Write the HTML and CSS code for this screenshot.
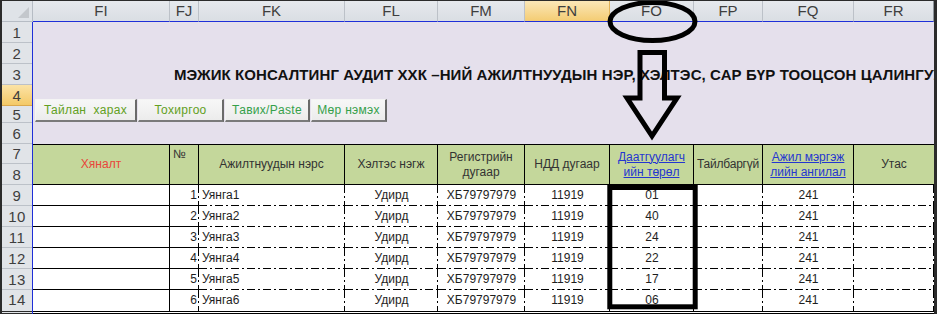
FILE: index.html
```html
<!DOCTYPE html>
<html lang="mn">
<head>
<meta charset="utf-8">
<title>Sheet</title>
<link rel="stylesheet" href="styles.css">
</head>
<body>
<div class="sheet">
  <div class="colbar">
    <div class="corner"><svg class="tri" width="11" height="11" viewBox="0 0 11 11"><polygon points="11,0 11,11 0,11" fill="#c3c7cc"/></svg></div>
    <div class="ch w-fi">FI</div>
    <div class="ch w-fj">FJ</div>
    <div class="ch w-fk">FK</div>
    <div class="ch w-fl">FL</div>
    <div class="ch w-fm">FM</div>
    <div class="ch w-fn sel">FN</div>
    <div class="ch w-fo">FO</div>
    <div class="ch w-fp">FP</div>
    <div class="ch w-fq">FQ</div>
    <div class="ch w-fr">FR</div>
  </div>
  <div class="main">
    <div class="rowbar">
      <div class="rh">1</div>
      <div class="rh">2</div>
      <div class="rh">3</div>
      <div class="rh sel">4</div>
      <div class="rh short">5</div>
      <div class="rh">6</div>
      <div class="rh r20">7</div>
      <div class="rh">8</div>
      <div class="rh">9</div>
      <div class="rh">10</div>
      <div class="rh">11</div>
      <div class="rh">12</div>
      <div class="rh">13</div>
      <div class="rh last">14</div>
    </div>
    <div class="content">
      <div class="banner">
        <div class="title">МЭЖИК КОНСАЛТИНГ АУДИТ ХХК –НИЙ АЖИЛТНУУДЫН НЭР, ХЭЛТЭС, САР БҮР ТООЦСОН ЦАЛИНГУУД</div>
        <div class="buttons">
          <div class="btn b1 olive">Тайлан&nbsp; харах</div>
          <div class="btn b2 olive">Тохиргоо</div>
          <div class="btn b3 green">Тавих/Paste</div>
          <div class="btn b4 green">Мөр нэмэх</div>
        </div>
      </div>
      <div class="thead">
        <div class="hc red">Хяналт</div>
        <div class="hc top">№</div>
        <div class="hc">Ажилтнуудын нэрс</div>
        <div class="hc">Хэлтэс нэгж</div>
        <div class="hc">Регистрийн<br>дугаар</div>
        <div class="hc">НДД дугаар</div>
        <div class="hc link">Даатгуулагч<br>ийн төрөл</div>
        <div class="hc narrow">Тайлбаргүй</div>
        <div class="hc link">Ажил мэргэж<br>лийн ангилал</div>
        <div class="hc">Утас</div>
      </div>
      <div class="tbody">
        <div class="row">
          <div class="c fi"></div><div class="c fj d-r">1</div><div class="c d left">Уянга1</div><div class="c d">Удирд</div><div class="c d">ХБ79797979</div><div class="c d">11919</div><div class="c d">01</div><div class="c d"></div><div class="c d">241</div><div class="c d"></div>
        </div>
        <div class="row">
          <div class="c fi"></div><div class="c fj d-r">2</div><div class="c d left">Уянга2</div><div class="c d">Удирд</div><div class="c d">ХБ79797979</div><div class="c d">11919</div><div class="c d">40</div><div class="c d"></div><div class="c d">241</div><div class="c d"></div>
        </div>
        <div class="row">
          <div class="c fi"></div><div class="c fj d-r">3</div><div class="c d left">Уянга3</div><div class="c d">Удирд</div><div class="c d">ХБ79797979</div><div class="c d">11919</div><div class="c d">24</div><div class="c d"></div><div class="c d">241</div><div class="c d"></div>
        </div>
        <div class="row">
          <div class="c fi"></div><div class="c fj d-r">4</div><div class="c d left">Уянга4</div><div class="c d">Удирд</div><div class="c d">ХБ79797979</div><div class="c d">11919</div><div class="c d">22</div><div class="c d"></div><div class="c d">241</div><div class="c d"></div>
        </div>
        <div class="row">
          <div class="c fi"></div><div class="c fj d-r">5</div><div class="c d left">Уянга5</div><div class="c d">Удирд</div><div class="c d">ХБ79797979</div><div class="c d">11919</div><div class="c d">17</div><div class="c d"></div><div class="c d">241</div><div class="c d"></div>
        </div>
        <div class="row lastrow">
          <div class="c fi"></div><div class="c fj d-r">6</div><div class="c d left">Уянга6</div><div class="c d">Удирд</div><div class="c d">ХБ79797979</div><div class="c d">11919</div><div class="c d">06</div><div class="c d"></div><div class="c d">241</div><div class="c d"></div>
        </div>
      </div>
    </div>
  </div>
  <svg class="annot" width="937" height="314" viewBox="0 0 937 314">
    <ellipse cx="652.5" cy="21.5" rx="42.5" ry="19" fill="none" stroke="#000" stroke-width="5"/>
    <polygon points="640,52.5 664.5,52.5 664.5,98 677,98 652,136 627,98 640,98" fill="none" stroke="#000" stroke-width="5" stroke-linejoin="miter"/>
    <rect x="609.8" y="187.5" width="85.4" height="119.3" fill="none" stroke="#000" stroke-width="5"/>
  </svg>
</div>
</body>
</html>
```
FILE: styles.css
```css
* { box-sizing: border-box; }
body {
  margin: 0;
  background: #fff;
  font-family: "Liberation Sans", Arial, sans-serif;
}
.sheet {
  position: relative;
  width: 937px;
  height: 314px;
  border-left: 2px solid #2b2b2b;
  border-top: 1px solid #2b2b2b;
  border-right: 3px solid #2b2b2b;
  overflow: hidden;
}

/* column letters */
.colbar {
  display: flex;
  height: 21px;
}
.corner {
  width: 31px;
  height: 21px;
  background: #dfe3e8;
  border-right: 1px solid #b6bcc4;
  border-bottom: 1px solid #b6bcc4;
  display: flex;
  justify-content: flex-end;
  align-items: flex-end;
  padding: 0 3px 3px 0;
}
.ch {
  height: 21px;
  background: linear-gradient(#e6e9ed, #dadee3);
  border-right: 1px solid #bcc1c8;
  border-bottom: 1px solid #1f2fd8;
  color: #3e3e3e;
  font-size: 15px;
  line-height: 20px;
  text-align: center;
}
.ch.sel {
  background: linear-gradient(#fbe7b8, #f4cc73);
  border-right-color: #e0b25a;
}
.w-fi { width: 137px; }
.w-fj { width: 29px; }
.w-fk { width: 146px; }
.w-fl { width: 93px; }
.w-fm { width: 87px; }
.w-fn { width: 85px; }
.w-fo { width: 84px; }
.w-fp { width: 69px; }
.w-fq { width: 91px; }
.w-fr { width: 80px; border-right: 1px solid #8f959c; }

.main {
  display: flex;
}

/* row numbers */
.rowbar {
  width: 30px;
  display: flex;
  flex-direction: column;
}
.rh {
  height: 21px;
  background: #e1e4e8;
  border-bottom: 1px solid #bcc1c8;
  color: #3e3e3e;
  font-size: 15px;
  line-height: 21px;
  text-align: center;
  letter-spacing: 0.5px;
}
.rh.sel {
  background: linear-gradient(#fbe3a6, #f4c967);
  border-bottom-color: #dba94e;
}
.rh.short { height: 17px; line-height: 17px; }
.rh.r20 { height: 20px; line-height: 20px; }
.rh.last { height: 24px; line-height: 20px; border-bottom: 3px double #2b2b2b; }

/* sheet content */
.content {
  width: 902px;
  border-left: 1px solid #1f2fd8;
  overflow: hidden;
}
.banner {
  height: 122px;
  background: #e5e0ec;
  padding: 43px 0 0 0;
}
.title {
  padding-left: 141px;
  height: 20px;
  line-height: 20px;
  font-size: 15px;
  font-weight: bold;
  color: #111;
  white-space: nowrap;
  letter-spacing: 0.1px;
}
.buttons {
  display: flex;
  gap: 1px;
  margin-top: 14px;
  padding-left: 2px;
}
.btn {
  height: 23px;
  background: linear-gradient(#f7f7f7, #ececec);
  border-top: 1px solid #f4f4f4;
  border-left: 1px solid #f4f4f4;
  border-right: 2px solid #6a6a6a;
  border-bottom: 2px solid #7a7a7a;
  font-size: 12px;
  line-height: 20px;
  text-align: center;
  white-space: nowrap;
  letter-spacing: 0.3px;
}
.b1 { width: 102px; }
.b2 { width: 86px; }
.b3 { width: 85px; }
.b4 { width: 76px; }
.olive { color: #62a022; }
.green { color: #35a04a; }

/* table header */
.thead {
  display: grid;
  grid-template-columns: 137px 29px 146px 93px 87px 85px 84px 69px 91px 80px;
  height: 41px;
  border-top: 1px solid #000;
  border-bottom: 1px solid #000;
  background: #c4d79b;
}
.hc {
  border-right: 1px solid #000;
  display: flex;
  align-items: center;
  justify-content: center;
  text-align: center;
  font-size: 12px;
  line-height: 15px;
  color: #333;
}
.hc:last-child { border-right: none; }
.hc.red { color: #e8463a; }
.hc.top {
  align-items: flex-start;
  justify-content: flex-start;
  padding: 2px 0 0 3px;
}
.hc.link {
  color: #2436d0;
  text-decoration: underline;
}
.hc.narrow { letter-spacing: -0.2px; white-space: nowrap; }

/* table body */
.tbody {
  border-bottom: 3px double #000;
}
.row {
  display: grid;
  grid-template-columns: 137px 29px 146px 93px 87px 85px 84px 69px 91px 80px;
  height: 21px;
}
.c {
  font-size: 12px;
  line-height: 20px;
  color: #1e1e1e;
  text-align: center;
  white-space: nowrap;
}
.fi {
  border-right: 1px solid #000;
  border-bottom: 1px solid #000;
}
.fj {
  border-bottom: 1px solid #000;
  text-align: right;
  padding-right: 2px;
}
.d-r {
  background-image: repeating-linear-gradient(to bottom, #000 0 8px, transparent 8px 11px, #000 11px 13px, transparent 13px 16px);
  background-size: 1px 100%;
  background-position: right top;
  background-repeat: no-repeat;
}
.d {
  background-image:
    repeating-linear-gradient(to right, #000 0 8px, transparent 8px 11px, #000 11px 13px, transparent 13px 16px),
    repeating-linear-gradient(to bottom, #000 0 8px, transparent 8px 11px, #000 11px 13px, transparent 13px 16px);
  background-size: 100% 1px, 1px 100%;
  background-position: left bottom, right top;
  background-repeat: no-repeat;
}
.d.left {
  text-align: left;
  padding-left: 3px;
}
.lastrow .fi,
.lastrow .fj { border-bottom: none; }
.lastrow .d {
  background-size: 0 0, 1px 100%;
}

/* annotations drawn over the sheet */
.annot {
  position: absolute;
  top: -1px;
  left: -2px;
  pointer-events: none;
}
```
